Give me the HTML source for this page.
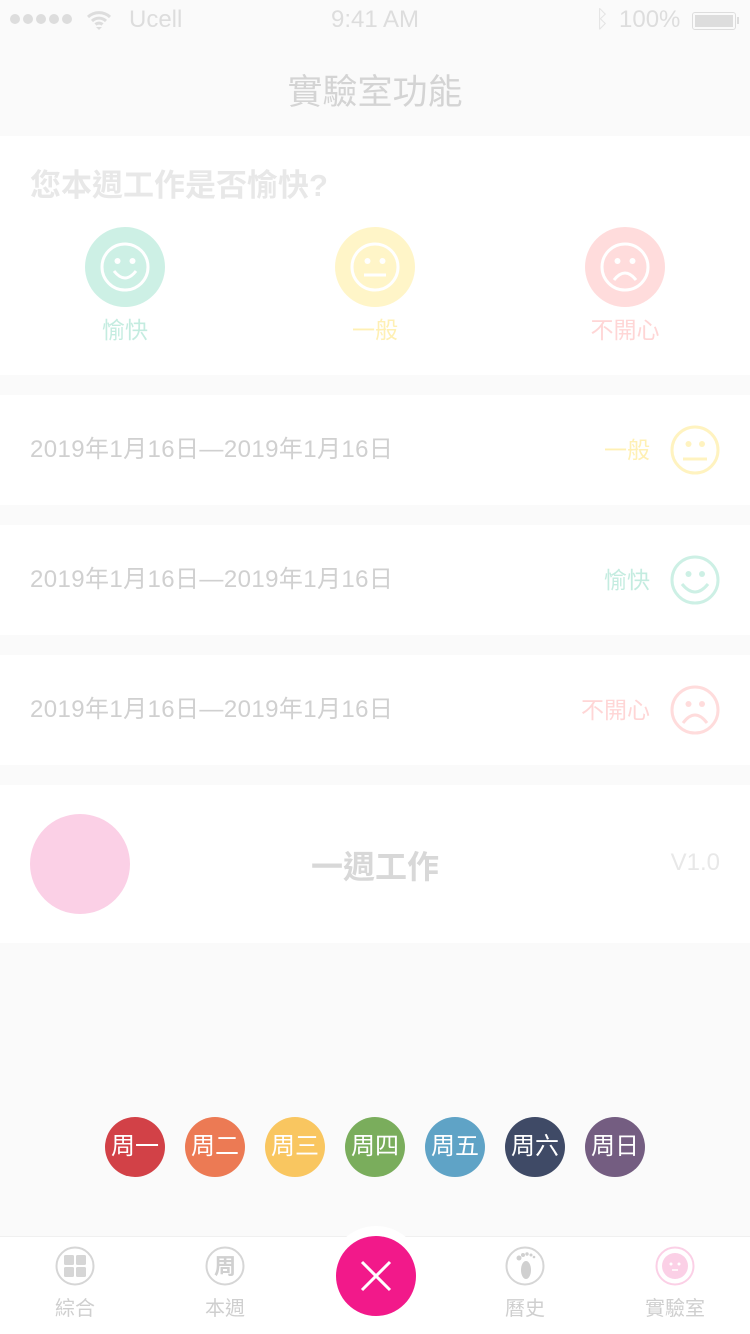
<!DOCTYPE html>
<html><head><meta charset="utf-8"><style>
*{margin:0;padding:0;box-sizing:border-box}
body{width:750px;height:1334px;background:#fafafa;font-family:"Liberation Sans","Noto Sans CJK TC",sans-serif;position:relative;overflow:hidden}
.abs{position:absolute}
.card{position:absolute;left:0;width:750px;background:#fff}
.date{position:absolute;left:30px;font-size:24px;letter-spacing:0.4px;color:#d0d0d0;top:0;line-height:110px}
.lab{position:absolute;font-size:23px;line-height:110px;top:0;text-align:right}
.day{position:absolute;top:1117px;width:60px;height:60px;border-radius:50%;color:#fff;font-size:24px;line-height:60px;text-align:center}
.tab{position:absolute;top:1246px;width:100px;text-align:center;font-size:20px;color:#cfcfcf}
</style></head><body>
<div class="abs" style="left:10px;top:14px;display:flex;gap:3px">
<i style="width:10px;height:10px;border-radius:50%;background:#ddd;display:block"></i><i style="width:10px;height:10px;border-radius:50%;background:#ddd;display:block"></i><i style="width:10px;height:10px;border-radius:50%;background:#ddd;display:block"></i><i style="width:10px;height:10px;border-radius:50%;background:#ddd;display:block"></i><i style="width:10px;height:10px;border-radius:50%;background:#ddd;display:block"></i></div>
<svg class="abs" style="left:86px;top:10px" width="26" height="20" viewBox="0 0 26 20"><path d="M2 7a16 16 0 0 1 22 0M6 11a10 10 0 0 1 14 0M9.5 14.5a5 5 0 0 1 7 0" stroke="#ddd" stroke-width="3" fill="none"/><path d="M10 17l3 3 3-3z" fill="#ddd"/></svg>
<div class="abs" style="left:129px;top:6px;font-size:24px;color:#ddd">Ucell</div>
<div class="abs" style="left:0;width:750px;text-align:center;top:6px;font-size:24px;color:#ddd">9:41 AM</div>
<div class="abs" style="left:595px;top:6px;font-size:24px;color:#e4e4e4">ᛒ</div>
<div class="abs" style="left:619px;top:6px;font-size:24px;color:#ddd">100%</div>
<div class="abs" style="left:692px;top:12px;width:44px;height:18px;border:1px solid #ddd;border-radius:3px;padding:2px"><div style="background:#ddd;width:100%;height:100%"></div></div>
<div class="abs" style="left:737px;top:17px;width:2px;height:7px;background:#ddd"></div>
<div class="abs" style="left:0;width:750px;text-align:center;top:64px;font-size:35px;color:#d4d4d4">實驗室功能</div>
<div class="card" style="top:136px;height:239px">
<div class="abs" style="left:30px;top:24px;font-size:31px;font-weight:bold;color:#e8e8e8">您本週工作是否愉快?</div>
<svg class="abs" style="left:85px;top:91px" width="80" height="80"><circle cx="40" cy="40" r="40" fill="#cdf0e5"/><circle cx="40" cy="40" r="23" fill="none" stroke="#fff" stroke-width="3"/><circle cx="32.5" cy="34" r="3" fill="#fff"/><circle cx="47.5" cy="34" r="3" fill="#fff"/><path d="M29 44q11 14 22 0" stroke="#fff" stroke-width="3" fill="none"/></svg>
<svg class="abs" style="left:335px;top:91px" width="80" height="80"><circle cx="40" cy="40" r="40" fill="#fff5c8"/><circle cx="40" cy="40" r="23" fill="none" stroke="#fff" stroke-width="3"/><circle cx="32.5" cy="34" r="3" fill="#fff"/><circle cx="47.5" cy="34" r="3" fill="#fff"/><path d="M29 48h22" stroke="#fff" stroke-width="3"/></svg>
<svg class="abs" style="left:585px;top:91px" width="80" height="80"><circle cx="40" cy="40" r="40" fill="#ffdcdc"/><circle cx="40" cy="40" r="23" fill="none" stroke="#fff" stroke-width="3"/><circle cx="32.5" cy="34" r="3" fill="#fff"/><circle cx="47.5" cy="34" r="3" fill="#fff"/><path d="M29 53q11 -14 22 0" stroke="#fff" stroke-width="3" fill="none"/></svg>
<div class="abs" style="left:75px;width:100px;text-align:center;top:175px;font-size:23px;color:#c4ece0">愉快</div>
<div class="abs" style="left:325px;width:100px;text-align:center;top:175px;font-size:23px;color:#fff0b4">一般</div>
<div class="abs" style="left:575px;width:100px;text-align:center;top:175px;font-size:23px;color:#ffd6d6">不開心</div>
</div>
<div class="card" style="top:395px;height:110px"><div class="date">2019年1月16日—2019年1月16日</div><div class="lab" style="right:100px;color:#fff0b4">一般</div>
<svg class="abs" style="left:670px;top:30px" width="50" height="50"><circle cx="25" cy="25" r="23" fill="none" stroke="#fff3c0" stroke-width="3"/><circle cx="18.5" cy="19" r="3" fill="#fff3c0"/><circle cx="32" cy="19" r="3" fill="#fff3c0"/><path d="M13 34h24" stroke="#fff3c0" stroke-width="3"/></svg></div>
<div class="card" style="top:525px;height:110px"><div class="date">2019年1月16日—2019年1月16日</div><div class="lab" style="right:100px;color:#c4ece0">愉快</div>
<svg class="abs" style="left:670px;top:30px" width="50" height="50"><circle cx="25" cy="25" r="23" fill="none" stroke="#cdf0e5" stroke-width="3"/><circle cx="18.5" cy="19" r="3" fill="#cdf0e5"/><circle cx="32" cy="19" r="3" fill="#cdf0e5"/><path d="M12 29q13 16 26 0" stroke="#cdf0e5" stroke-width="3" fill="none"/></svg></div>
<div class="card" style="top:655px;height:110px"><div class="date">2019年1月16日—2019年1月16日</div><div class="lab" style="right:100px;color:#ffd6d6">不開心</div>
<svg class="abs" style="left:670px;top:30px" width="50" height="50"><circle cx="25" cy="25" r="23" fill="none" stroke="#ffdcdc" stroke-width="3"/><circle cx="18.5" cy="19" r="3" fill="#ffdcdc"/><circle cx="32" cy="19" r="3" fill="#ffdcdc"/><path d="M13 38q12 -16 24 0" stroke="#ffdcdc" stroke-width="3" fill="none"/></svg></div>
<div class="card" style="top:785px;height:158px">
<div class="abs" style="left:30px;top:29px;width:100px;height:100px;border-radius:50%;background:#fbd0e6"></div>
<div class="abs" style="left:0;width:750px;text-align:center;top:57px;font-size:32px;font-weight:bold;color:#d8d8d8">一週工作</div>
<div class="abs" style="right:30px;top:64px;font-size:24px;color:#e8e8e8">V1.0</div>
</div>
<div class="day" style="left:105px;background:#d24147">周一</div>
<div class="day" style="left:185px;background:#ec7a54">周二</div>
<div class="day" style="left:265px;background:#f9c660">周三</div>
<div class="day" style="left:345px;background:#7aad5c">周四</div>
<div class="day" style="left:425px;background:#5fa3c6">周五</div>
<div class="day" style="left:505px;background:#3f4a66">周六</div>
<div class="day" style="left:585px;background:#745d81">周日</div>
<div class="abs" style="left:0;top:1236px;width:750px;height:98px;background:#fff;border-top:1px solid #f0f0f0"></div>
<div class="abs" style="left:330px;top:1226px;width:92px;height:92px;border-radius:50%;background:#fff"></div>
<div class="abs" style="left:336px;top:1236px;width:80px;height:80px;border-radius:50%;background:#f2198a"></div>
<svg class="abs" style="left:336px;top:1236px" width="80" height="80"><path d="M26 26l28 28M54 26L26 54" stroke="#fff" stroke-width="3"/></svg>
<svg class="abs" style="left:55px;top:1246px" width="40" height="40"><circle cx="20" cy="20" r="18.5" fill="none" stroke="#d6d6d6" stroke-width="2"/><rect x="9" y="9" width="10" height="10" rx="1.5" fill="#d6d6d6"/><rect x="21" y="9" width="10" height="10" rx="1.5" fill="#d6d6d6"/><rect x="9" y="21" width="10" height="10" rx="1.5" fill="#d6d6d6"/><rect x="21" y="21" width="10" height="10" rx="1.5" fill="#d6d6d6"/></svg>
<svg class="abs" style="left:205px;top:1246px" width="40" height="40"><circle cx="20" cy="20" r="18.5" fill="none" stroke="#d6d6d6" stroke-width="2"/><text x="20" y="28" font-size="22" font-weight="bold" fill="#d0d0d0" text-anchor="middle" font-family="Noto Sans CJK TC,sans-serif">周</text></svg>
<svg class="abs" style="left:505px;top:1246px" width="40" height="40"><circle cx="20" cy="20" r="18.5" fill="none" stroke="#d6d6d6" stroke-width="2"/><ellipse cx="21" cy="24" rx="5" ry="9" fill="#d0d0d0"/><circle cx="14" cy="12" r="2.5" fill="#d0d0d0"/><circle cx="18" cy="9" r="2" fill="#d0d0d0"/><circle cx="22" cy="8" r="1.7" fill="#d0d0d0"/><circle cx="26" cy="9" r="1.5" fill="#d0d0d0"/><circle cx="29" cy="11" r="1.3" fill="#d0d0d0"/></svg>
<svg class="abs" style="left:655px;top:1246px" width="40" height="40"><circle cx="20" cy="20" r="18.5" fill="none" stroke="#fbd0e6" stroke-width="2"/><circle cx="20" cy="20" r="13" fill="#fbd0e6"/><circle cx="16" cy="18" r="1.5" fill="#fff"/><circle cx="24" cy="18" r="1.5" fill="#fff"/><path d="M17 24h6" stroke="#fff" stroke-width="1.5"/></svg>
<div class="tab" style="left:25px;top:1292px">綜合</div>
<div class="tab" style="left:175px;top:1292px">本週</div>
<div class="tab" style="left:475px;top:1292px">曆史</div>
<div class="tab" style="left:625px;top:1292px">實驗室</div>
</body></html>
